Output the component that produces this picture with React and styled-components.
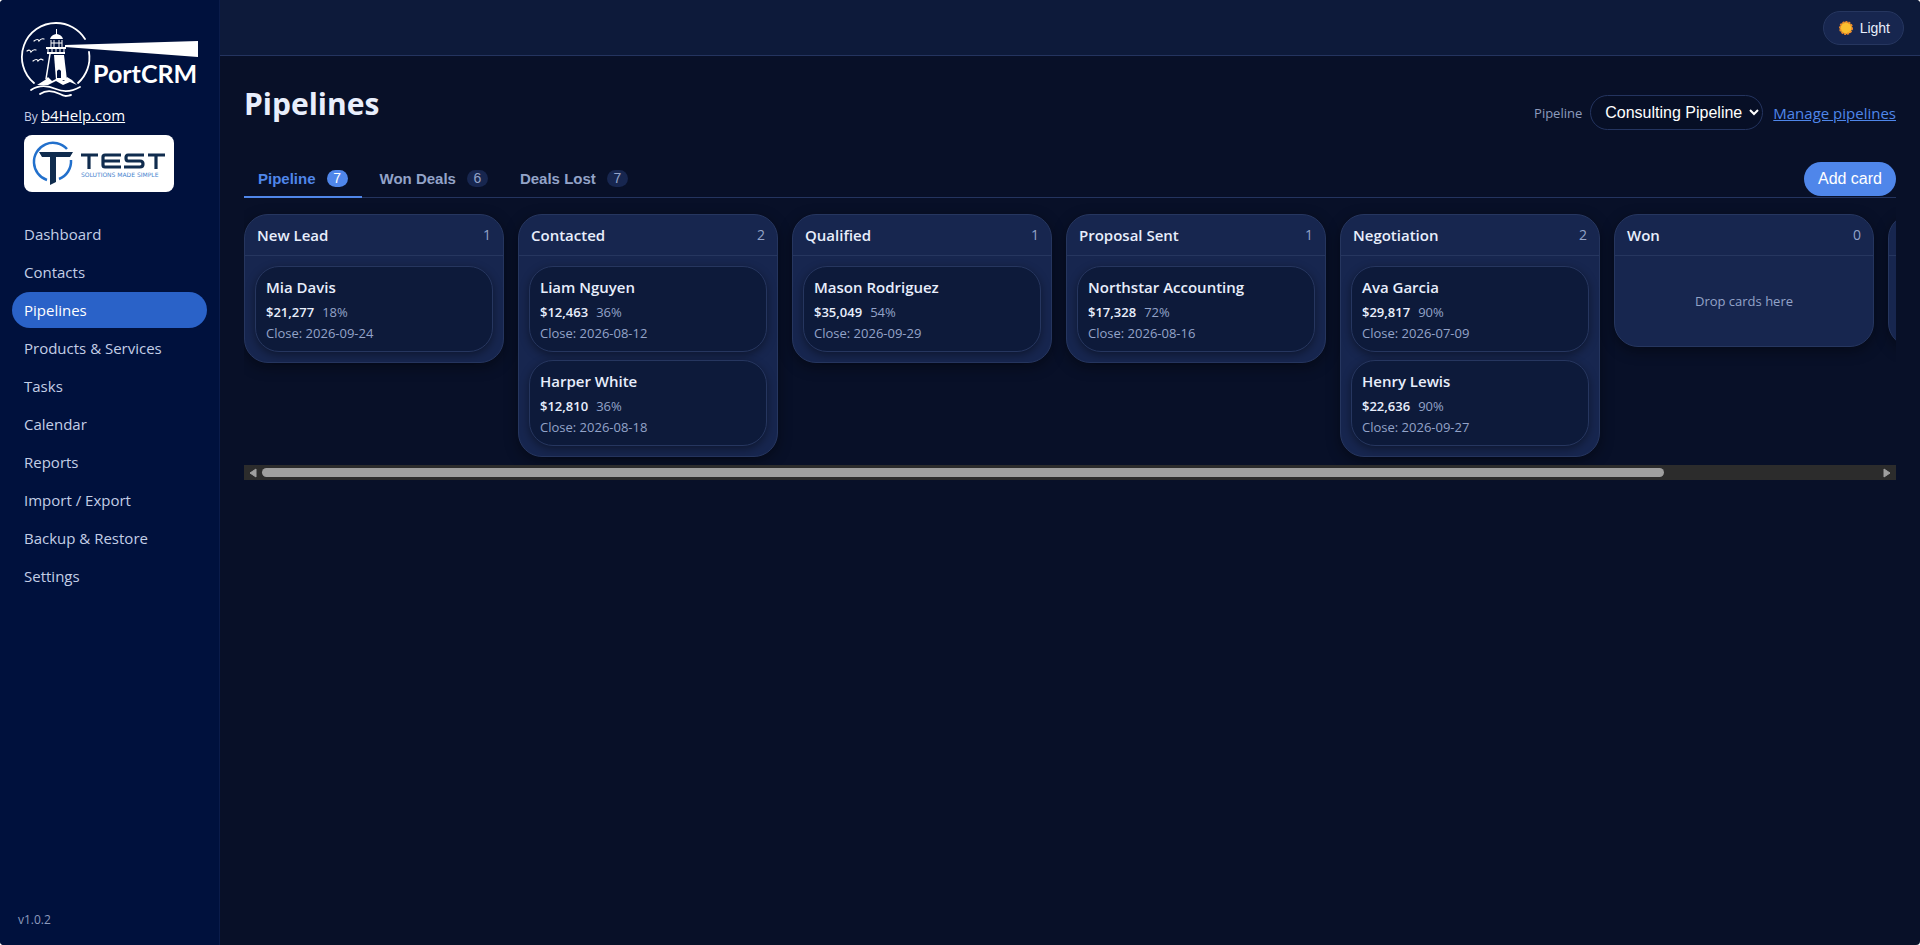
import React, { useEffect, useRef, useState } from 'react';
import styled, { createGlobalStyle } from 'styled-components';

const navItems = [
  'Dashboard',
  'Contacts',
  'Pipelines',
  'Products & Services',
  'Tasks',
  'Calendar',
  'Reports',
  'Import / Export',
  'Backup & Restore',
  'Settings',
];

const tabs = [
  { label: 'Pipeline', count: 7 },
  { label: 'Won Deals', count: 6 },
  { label: 'Deals Lost', count: 7 },
];

const stages = [
  {
    name: 'New Lead',
    cards: [{ name: 'Mia Davis', value: '$21,277', chance: '18%', close: '2026-09-24' }],
  },
  {
    name: 'Contacted',
    cards: [
      { name: 'Liam Nguyen', value: '$12,463', chance: '36%', close: '2026-08-12' },
      { name: 'Harper White', value: '$12,810', chance: '36%', close: '2026-08-18' },
    ],
  },
  {
    name: 'Qualified',
    cards: [{ name: 'Mason Rodriguez', value: '$35,049', chance: '54%', close: '2026-09-29' }],
  },
  {
    name: 'Proposal Sent',
    cards: [{ name: 'Northstar Accounting', value: '$17,328', chance: '72%', close: '2026-08-16' }],
  },
  {
    name: 'Negotiation',
    cards: [
      { name: 'Ava Garcia', value: '$29,817', chance: '90%', close: '2026-07-09' },
      { name: 'Henry Lewis', value: '$22,636', chance: '90%', close: '2026-09-27' },
    ],
  },
  { name: 'Won', cards: [] },
  { name: 'Lost', cards: [] },
];

const PortLogo = () => (
  <svg width='180' height='78' viewBox='0 0 180 78' role='img' aria-label='PortCRM'>
    <g fill='none' stroke='#fff' strokeWidth='1.8' strokeLinecap='round'>
      <path d='M14 63A34 34 0 0 1 36 3A34 34 0 0 1 65 19' />
      <path d='M69 32A34 34 0 0 1 58 63' />
      <path d='M11 70C20 64 29 66 36 69S51 72 60 67' />
      <path d='M20 74C27 69 34 71 40 74S46 76 51 75' />
      <path
        strokeWidth='1.2'
        d='M14 21Q18 18 19 21Q21 18 24 19M7 31Q10 29 11 32Q13 29 16 30M13 41Q17 38 18 41Q20 38 23 40'
      />
    </g>
    <g fill='#fff'>
      <path d='M36 9h1v5q5 1 6 5H30q1-4 6-5z' />
      <path d='M26 27h20v2H26zM27 32h18v2H27z' />
      <path d='M34 35h10l3 25H36z' />
      <path d='M45 25L178 21V37L45 27z' />
      <path d='M17 65L25 60L28 57L32 61L38 58L44 61L47 57L52 60L57 65L50 62L43 65L36 61L28 65z' />
    </g>
    <g fill='none' stroke='#fff' strokeWidth='1'>
      <path d='M31 20v7M34 20v7M39 20v7M42 20v7M31 23h11' />
      <path d='M28 29v3M32 29v3M36 29v3M40 29v3M44 29v3' />
      <path d='M30 34L26 59' strokeWidth='1.5' />
    </g>
    <path d='M37 58v-7q2-3 4 0v7z' fill='#00113d' />
    <text x='73' y='63' fill='#fff' fontFamily='Lato, sans-serif' fontSize='25' fontWeight='700'>
      PortCRM
    </text>
  </svg>
);

const TestLogo = () => (
  <svg width='134' height='49' viewBox='0 0 134 49' role='img' aria-label='TEST Solutions made simple'>
    <path d='M35 10A19 19 0 0 0 2 24A19 19 0 0 0 15 41' fill='none' stroke='#2270cc' strokeWidth='2.5' />
    <path d='M39 21A19 19 0 0 1 27 40' fill='none' stroke='#2270cc' strokeWidth='2.5' />
    <path d='M7 13H41L38 18H24V43L18 46V18H10z' fill='#102c4e' />
    <g fill='none' stroke='#102c4e' strokeWidth='3.2'>
      <path d='M49 16H66M57 16V30' />
      <path d='M89 16H73Q71 16 71 18V26Q71 28 73 28H89M71 22H88' />
      <path d='M112 16H96Q94 16 94 19Q94 22 96 22H108Q111 22 111 25Q111 28 108 28H92' />
      <path d='M116 16H133M124 16V30' />
    </g>
    <text x='49' y='38' fill='#4784ce' fontFamily='DejaVu Sans, sans-serif' fontSize='6'>
      SOLUTIONS MADE SIMPLE
    </text>
  </svg>
);

const SunIcon = () => (
  <svg width='16' height='16' viewBox='0 0 16 16' aria-hidden='true'>
    <circle cx='8' cy='8' r='6' fill='#fbc02f' />
    <circle cx='8' cy='8' r='6' fill='none' stroke='#ee8a2a' strokeWidth='2' strokeDasharray='2 1' />
  </svg>
);

const Board = () => {
  const ref = useRef(null);
  const [bar, setBar] = useState({ width: 100, left: 0 });

  const measure = () => {
    const el = ref.current;
    setBar({
      width: (el.clientWidth / el.scrollWidth) * 100,
      left: (el.scrollLeft / el.scrollWidth) * 100,
    });
  };

  useEffect(() => {
    measure();
    window.addEventListener('resize', measure);
    return () => window.removeEventListener('resize', measure);
  }, []);

  const move = (by) => ref.current.scrollBy({ left: by, behavior: 'smooth' });

  return (
    <section>
      <Columns ref={ref} onScroll={measure}>
        {stages.map((stage) => (
          <Column key={stage.name}>
            <ColumnHead>
              <ColumnTitle>{stage.name}</ColumnTitle>
              <ColumnCount>{stage.cards.length}</ColumnCount>
            </ColumnHead>
            <ColumnBody>
              {stage.cards.map((card) => (
                <Card key={card.name}>
                  <CardTitle>{card.name}</CardTitle>
                  <CardLine>
                    <strong>{card.value}</strong>
                    <span>{card.chance}</span>
                  </CardLine>
                  <CardLine>Close: {card.close}</CardLine>
                </Card>
              ))}
              {stage.cards.length === 0 && <Empty>Drop cards here</Empty>}
            </ColumnBody>
          </Column>
        ))}
      </Columns>
      <ScrollBar>
        <ScrollButton aria-label='Scroll left' onClick={() => move(-274)}>
          <svg width='8' height='10' viewBox='0 0 8 10'>
            <path d='M7 1V9L1 5z' fill='#9f9f9f' stroke='#9f9f9f' strokeLinejoin='round' />
          </svg>
        </ScrollButton>
        <Track>
          <Thumb style={{ width: `${bar.width}%`, marginLeft: `${bar.left}%` }} />
        </Track>
        <ScrollButton aria-label='Scroll right' onClick={() => move(274)}>
          <svg width='8' height='10' viewBox='0 0 8 10'>
            <path d='M1 1V9L7 5z' fill='#9f9f9f' stroke='#9f9f9f' strokeLinejoin='round' />
          </svg>
        </ScrollButton>
      </ScrollBar>
    </section>
  );
};

const App = () => {
  const [tab, setTab] = useState('Pipeline');

  return (
    <>
      <GlobalStyle />
      <Shell>
        <Sidebar>
          <Brand>
            <PortLogo />
          </Brand>
          <Byline>
            By <a href='#b4help'>b4Help.com</a>
          </Byline>
          <Client>
            <TestLogo />
          </Client>
          <Nav>
            {navItems.map((item) => (
              <NavLink key={item} href='#' $active={item === 'Pipelines'}>
                {item}
              </NavLink>
            ))}
          </Nav>
          <Version>v1.0.2</Version>
        </Sidebar>
        <Main>
          <TopBar>
            <ThemeButton>
              <SunIcon />
              Light
            </ThemeButton>
          </TopBar>
          <Content>
            <PageHead>
              <h1>Pipelines</h1>
              <Picker>
                <label htmlFor='pipeline'>Pipeline</label>
                <Select id='pipeline'>
                  <option>Consulting Pipeline</option>
                </Select>
                <ManageLink href='#manage'>Manage pipelines</ManageLink>
              </Picker>
            </PageHead>
            <TabBar>
              <Tabs>
                {tabs.map(({ label, count }) => (
                  <Tab key={label} $active={label === tab} onClick={() => setTab(label)}>
                    {label}
                    <Badge $active={label === tab}>{count}</Badge>
                  </Tab>
                ))}
              </Tabs>
              <AddButton>Add card</AddButton>
            </TabBar>
            <Board />
          </Content>
        </Main>
      </Shell>
    </>
  );
};

const GlobalStyle = createGlobalStyle`
  * {
    box-sizing: border-box;
  }

  body {
    margin: 0;
    background: #fff;
    color: #e8eefc;
    font-family: 'Segoe UI', 'Open Sans', sans-serif;
    font-size: 15px;
    line-height: 24px;
  }

  button,
  select {
    font-family: Arial, 'Liberation Sans', sans-serif;
    cursor: pointer;
  }
`;

const Shell = styled.div`
  display: flex;
  min-height: 100vh;
  overflow: hidden;
  border-radius: 4px;
  background: #081028;
`;

const Sidebar = styled.aside`
  display: flex;
  flex-direction: column;
  flex: 0 0 220px;
  background: #00113d;
  border-right: 1px solid #0b1c4a;
`;

const Brand = styled.div`
  padding: 20px 0 0 20px;

  svg {
    display: block;
  }
`;

const Byline = styled.div`
  padding: 5px 24px 0;
  color: #c3cee6;
  font-size: 12px;

  a {
    color: #fff;
    font-size: 15px;
  }
`;

const Client = styled.div`
  align-self: flex-start;
  width: 150px;
  margin: 6px 24px 0;
  padding: 4px 8px;
  border-radius: 8px;
  background: #fff;

  svg {
    display: block;
  }
`;

const Nav = styled.nav`
  display: flex;
  flex-direction: column;
  gap: 2px;
  padding: 24px 12px;
`;

const NavLink = styled.a`
  padding: 6px 12px;
  border-radius: 18px;
  color: ${({ $active }) => ($active ? '#fff' : '#c3cee6')};
  background: ${({ $active }) => ($active ? '#2a62c8' : 'transparent')};
  text-decoration: none;
`;

const Version = styled.div`
  margin-top: auto;
  padding: 13px 18px;
  color: #8d9bbd;
  font-size: 12px;
`;

const Main = styled.main`
  flex: 1;
  min-width: 0;
`;

const TopBar = styled.header`
  display: flex;
  align-items: center;
  justify-content: flex-end;
  height: 56px;
  padding: 0 16px;
  background: #0d1a3a;
  border-bottom: 1px solid #24345f;
`;

const ThemeButton = styled.button`
  display: flex;
  align-items: center;
  gap: 6px;
  height: 34px;
  padding: 0 13px 0 14px;
  border: 1px solid #26365f;
  border-radius: 17px;
  background: #17264f;
  color: #e8eefc;
  font-size: 14px;
`;

const Content = styled.div`
  padding: 24px;
`;

const PageHead = styled.div`
  display: flex;
  justify-content: space-between;
  align-items: flex-start;
  height: 78px;

  h1 {
    margin: 0;
    font-size: 30px;
    line-height: 48px;
  }
`;

const Picker = styled.div`
  display: flex;
  align-items: center;
  padding-top: 15px;

  label {
    color: #8d9bbd;
    font-size: 13px;
  }
`;

const Select = styled.select`
  width: 173px;
  height: 35px;
  margin: 0 10px 0 8px;
  padding: 0 0 0 10px;
  border: 1px solid #24345f;
  border-radius: 18px;
  background: #070f26;
  color: #fff;
  color-scheme: dark;
  font-size: 16px;
`;

const ManageLink = styled.a`
  color: #4f86ea;
`;

const TabBar = styled.div`
  display: flex;
  align-items: flex-end;
  justify-content: space-between;
  height: 40px;
  border-bottom: 1px solid #24345f;
`;

const Tabs = styled.div`
  display: flex;
  gap: 4px;
`;

const Tab = styled.button`
  display: flex;
  align-items: center;
  gap: 11px;
  height: 38px;
  margin-bottom: -1px;
  padding: 0 14px;
  border: 0;
  border-bottom: 2px solid ${({ $active }) => ($active ? '#4f86ea' : 'transparent')};
  background: none;
  color: ${({ $active }) => ($active ? '#4f86ea' : '#93a3c8')};
  font-size: 15px;
  font-weight: 700;
`;

const Badge = styled.span`
  min-width: 21px;
  border-radius: 9px;
  background: ${({ $active }) => ($active ? '#4f86ea' : '#17264f')};
  color: ${({ $active }) => ($active ? '#fff' : '#93a3c8')};
  font-size: 14px;
  font-weight: 400;
  line-height: 17px;
`;

const AddButton = styled.button`
  height: 34px;
  margin-bottom: 1px;
  padding: 0 14px;
  border: 0;
  border-radius: 17px;
  background: #4f86ea;
  color: #fff;
  font-size: 16px;
`;

const Columns = styled.div`
  display: flex;
  align-items: flex-start;
  gap: 14px;
  padding: 16px 0 8px;
  overflow-x: auto;
  scrollbar-width: none;
`;

const Column = styled.section`
  flex: 0 0 260px;
  border: 1px solid #26365f;
  border-radius: 24px;
  background: #17264f;
  box-shadow: 0 4px 14px rgba(0, 0, 0, 0.4);
`;

const ColumnHead = styled.header`
  display: flex;
  align-items: center;
  justify-content: space-between;
  height: 41px;
  padding: 0 12px;
  border-bottom: 1px solid #26365f;
`;

const ColumnTitle = styled.h2`
  margin: 0;
  font-size: 15px;
  font-weight: 600;
`;

const ColumnCount = styled.span`
  color: #93a3c8;
  font-size: 14px;
`;

const ColumnBody = styled.div`
  display: flex;
  flex-direction: column;
  gap: 8px;
  min-height: 90px;
  padding: 10px;
`;

const Card = styled.article`
  padding: 8px 10px 7px;
  border: 1px solid #26365f;
  border-radius: 24px;
  background: #0d1a3a;
  box-shadow: 0 3px 10px rgba(0, 0, 0, 0.4);
`;

const CardTitle = styled.h3`
  margin: 0 0 3px;
  font-size: 15px;
  font-weight: 600;
`;

const CardLine = styled.div`
  display: flex;
  gap: 8px;
  color: #93a3c8;
  font-size: 13px;
  line-height: 21px;

  strong {
    color: #e8eefc;
    font-weight: 600;
  }
`;

const Empty = styled.p`
  margin: auto;
  color: #93a3c8;
  font-size: 13px;
`;

const ScrollBar = styled.div`
  display: flex;
  height: 15px;
  background: #2c2c2c;
`;

const ScrollButton = styled.button`
  display: flex;
  align-items: center;
  justify-content: center;
  width: 18px;
  padding: 0;
  border: 0;
  background: none;
`;

const Track = styled.div`
  flex: 1;
  padding: 3px 0;
`;

const Thumb = styled.div`
  height: 9px;
  border-radius: 5px;
  background: #9f9f9f;
`;

export default App;
